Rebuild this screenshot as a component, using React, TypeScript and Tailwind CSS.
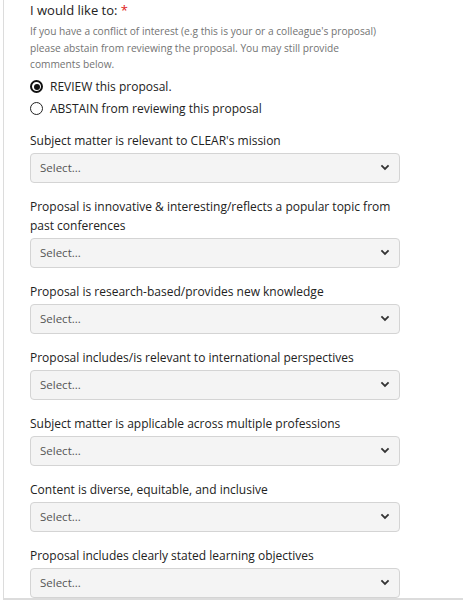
import React from 'react';

const criteria = [
  "Subject matter is relevant to CLEAR's mission",
  'Proposal is innovative & interesting/reflects a popular topic from past conferences',
  'Proposal is research-based/provides new knowledge',
  'Proposal includes/is relevant to international perspectives',
  'Subject matter is applicable across multiple professions',
  'Content is diverse, equitable, and inclusive',
  'Proposal includes clearly stated learning objectives',
];

function Chevron() {
  return (
    <svg width="10" height="7" viewBox="0 0 10 7" className="text-[#333]">
      <path d="M1.4 1.4 L5 4.9 L8.6 1.4" fill="none" stroke="currentColor" strokeWidth="1.8" />
    </svg>
  );
}

function Radio({ checked, label }: { checked?: boolean; label: string }) {
  return (
    <label className="flex h-[22px] items-center gap-[7px]">
      <span
        className={`flex h-[13px] w-[13px] items-center justify-center rounded-full bg-white ${
          checked ? 'border-[2px] border-[#111]' : 'border border-[#222]'
        }`}
      >
        {checked && <span className="h-[6px] w-[6px] rounded-full bg-[#111]" />}
      </span>
      <span className="text-[12px] text-[#222]">{label}</span>
    </label>
  );
}

function SelectField({ label }: { label: string }) {
  return (
    <div className="mb-[14px]">
      <div className="mb-[3px] w-[370px] text-[12px] leading-[19px] text-[#222]">{label}</div>
      <div className="flex h-[30px] w-[370px] items-center justify-between rounded-[4px] border border-[#d4d4d4] bg-[#f4f4f4] pl-[9px] pr-[9px]">
        <span className="text-[11.5px] text-[#555]">Select...</span>
        <Chevron />
      </div>
    </div>
  );
}

export default function App() {
  return (
    <div className="h-[601px] w-[463px] overflow-hidden bg-white font-['Open_Sans',sans-serif]">
      <div className="ml-[3px] h-[600px] border-b-2 border-l border-b-[#dcdcdc] border-l-[#dcdcdc] pl-[26px]">
        <div className="text-[13px] leading-[21px] text-[#222]">
          I would like to: <span className="text-[#e02020]">*</span>
        </div>
        <p className="mt-[2px] w-[370px] text-[10.2px] leading-[16.5px] text-[#737373]">
          If you have a conflict of interest (e.g this is your or a colleague's proposal)
          <br />
          please abstain from reviewing the proposal. You may still provide
          <br />
          comments below.
        </p>
        <div className="mt-[3px] mb-[11px]">
          <Radio checked label="REVIEW this proposal." />
          <Radio label="ABSTAIN from reviewing this proposal" />
        </div>
        {criteria.map((c) => (
          <SelectField key={c} label={c} />
        ))}
      </div>
    </div>
  );
}
